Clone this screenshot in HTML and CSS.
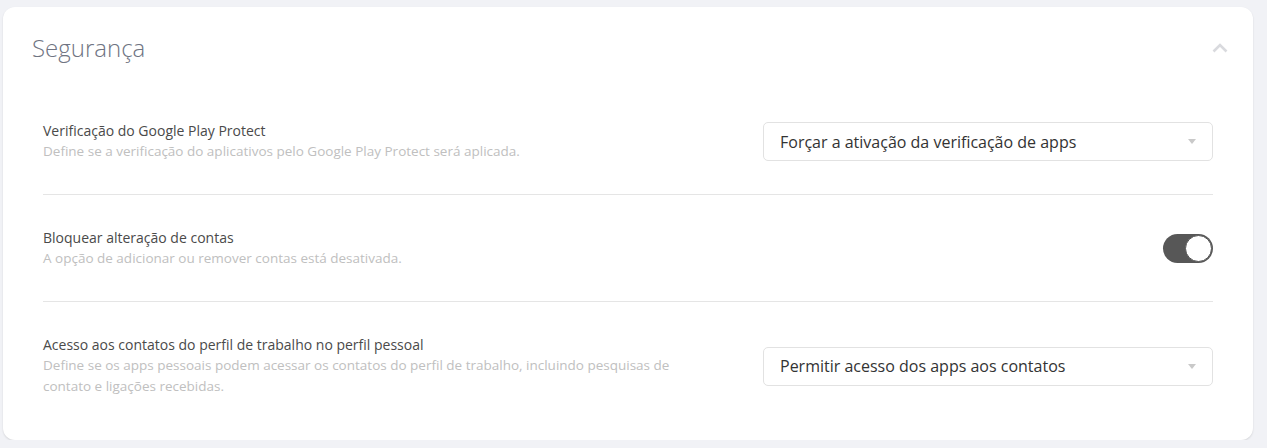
FILE: index.html
```html
<!DOCTYPE html>
<html lang="pt-BR">
<head>
<meta charset="utf-8">
<link rel="stylesheet" href="styles.css">
</head>
<body>
<section class="card">
  <header class="card-head">
    <h2 class="card-title">Segurança</h2>
    <svg class="chev" width="16" height="10" viewBox="0 0 16 10"><path d="M1.5 8.5 L8 2 L14.5 8.5" fill="none" stroke="#d9dade" stroke-width="2.6"/></svg>
  </header>
  <div class="rows">
    <div class="row">
      <div class="info">
        <div class="label">Verificação do Google Play Protect</div>
        <div class="desc">Define se a verificação do aplicativos pelo Google Play Protect será aplicada.</div>
      </div>
      <div class="select"><span>Forçar a ativação da verificação de apps</span><i class="caret"></i></div>
    </div>
    <div class="row">
      <div class="info">
        <div class="label">Bloquear alteração de contas</div>
        <div class="desc">A opção de adicionar ou remover contas está desativada.</div>
      </div>
      <div class="toggle"><i class="knob"></i></div>
    </div>
    <div class="row">
      <div class="info">
        <div class="label">Acesso aos contatos do perfil de trabalho no perfil pessoal</div>
        <div class="desc">Define se os apps pessoais podem acessar os contatos do perfil de trabalho, incluindo pesquisas de contato e ligações recebidas.</div>
      </div>
      <div class="select"><span>Permitir acesso dos apps aos contatos</span><i class="caret"></i></div>
    </div>
  </div>
</section>
</body>
</html>
```
FILE: styles.css
```css
html, body { margin: 0; padding: 0; }
body {
  background: #f1f2f6;
  font-family: "Open Sans", "Noto Sans", sans-serif;
  padding: 7px 14px 0 3px;
}
.card {
  background: #fff;
  border-radius: 12px;
  box-shadow: 0 1px 2px rgba(0,0,0,0.12);
  padding: 0 40px 11px 40px;
}
.card-head {
  display: flex;
  align-items: center;
  justify-content: space-between;
  height: 80px;
  padding-top: 1px;
  margin: 0 -15px 0 -11px;
}
.card-title {
  margin: 0;
  font-size: 24px;
  font-weight: 300;
  color: #6f7482;
  line-height: 1;
}
.row {
  display: flex;
  align-items: center;
  justify-content: space-between;
  padding: 33px 0 32px;
  border-bottom: 1px solid #e5e5e5;
}
.row:last-child { border-bottom: none; }
.info { max-width: 640px; }
.label {
  font-size: 14px;
  line-height: 20px;
  color: #4a4a4a;
}
.desc {
  font-size: 13.5px;
  line-height: 21px;
  color: #c0c0c0;
}
.select {
  width: 450px;
  height: 39px;
  box-sizing: border-box;
  border: 1px solid #e2e2e2;
  border-radius: 5px;
  display: flex;
  align-items: center;
  justify-content: space-between;
  padding: 0 16px;
  font-size: 16px;
  color: #333;
}
.caret {
  width: 0; height: 0;
  border-left: 4px solid transparent;
  border-right: 4px solid transparent;
  border-top: 5px solid #c9c9c9;
}
.toggle {
  width: 50px;
  height: 29px;
  box-sizing: border-box;
  background: #575757;
  border-radius: 15px;
  position: relative;
}
.knob {
  position: absolute;
  right: 1px; top: 1px;
  width: 27px; height: 27px;
  box-sizing: border-box;
  background: #fff;
  border: 1px solid #575757;
  border-radius: 50%;
}
```
